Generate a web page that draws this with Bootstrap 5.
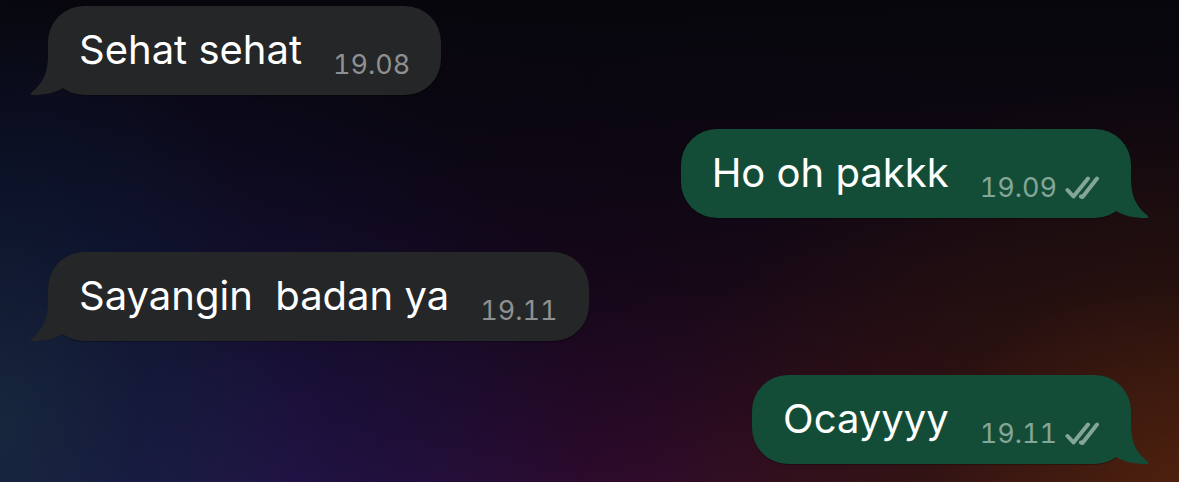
<!DOCTYPE html>
<html lang="id">
<head>
<meta charset="utf-8">
<meta name="viewport" content="width=device-width, initial-scale=1">
<title>Chat</title>
<link href="https://cdn.jsdelivr.net/npm/bootstrap@5.3.0/dist/css/bootstrap.min.css" rel="stylesheet">
<style>
  body {
    font-family: Inter, "Liberation Sans", sans-serif;
    background:
      radial-gradient(ellipse 24% 90% at 0 85%, rgba(20, 44, 62, .6), rgba(10, 28, 54, .4) 50%, transparent),
      radial-gradient(ellipse 38% 100% at 12% 100%, rgba(28, 30, 76, .5), rgba(16, 20, 60, .35) 50%, transparent),
      radial-gradient(ellipse 44% 85% at 100% 100%, rgba(80, 34, 14, .85), rgba(44, 20, 12, .5) 50%, transparent),
      linear-gradient(to bottom, #07060c, rgba(9, 6, 16, .92) 30%, rgba(10, 6, 16, .65) 60%, transparent),
      linear-gradient(to right, #24243e, #270f44 25%, #2c0a2c 50%, #38101e 75%, #3c160f);
    background-color: #07060c;
  }
  .chat { gap: 34px; padding: 6px 48px 18px; }
  .bubble {
    position: relative;
    gap: 31px;
    padding: 12px 31px 13px 31px;
    border-radius: 36px;
    color: #fff;
    font-size: 40px;
    line-height: 64px;
    white-space: pre-wrap;
    box-shadow: 0 1px 1px rgba(0, 0, 0, .3);
  }
  .bubble-in { background: #242627; --fill: #242627; --meta: #8f9091; }
  .bubble-out { background: #144d37; --fill: #144d37; --meta: #84a698; }
  .stamp { gap: 8px; color: var(--meta); font-size: 27px; font-variant-numeric: tabular-nums; line-height: 34px; padding-top: 30px; }
  .stamp time { min-width: 76px; }
  .tail { position: absolute; bottom: 0; width: 48px; height: 42px; fill: var(--fill); }
  .bubble-in .tail { left: -18px; }
  .bubble-out .tail { right: -18px; transform: scaleX(-1); }
  .ticks { width: 35px; height: 24px; fill: none; stroke: var(--meta); stroke-width: 4; stroke-linecap: round; stroke-linejoin: round; }
</style>
</head>
<body class="min-vh-100">
<svg class="d-none" aria-hidden="true">
  <symbol id="tail" viewBox="0 0 48 42"><path d="M18 0C18 20 14 29 1 40Q0 42 3 42C15 42 24 40 33 35L48 25V0Z"/></symbol>
  <symbol id="ticks" viewBox="0 0 35 24"><path d="M2.5 14L8.5 20.5L23 2.500M16 20.500L17.500 21L32 2.500"/></symbol>
</svg>
<main class="chat d-flex flex-column">
  <div class="bubble bubble-in d-flex align-self-start"><svg class="tail" aria-hidden="true"><use href="#tail"/></svg><span>Sehat sehat</span><span class="stamp d-flex align-items-center"><time>19.08</time></span></div>
  <div class="bubble bubble-out d-flex align-self-end"><svg class="tail" aria-hidden="true"><use href="#tail"/></svg><span>Ho oh pakkk</span><span class="stamp d-flex align-items-center"><time>19.09</time><svg class="ticks" role="img" aria-label="Terkirim"><use href="#ticks"/></svg></span></div>
  <div class="bubble bubble-in d-flex align-self-start"><svg class="tail" aria-hidden="true"><use href="#tail"/></svg><span>Sayangin  badan ya</span><span class="stamp d-flex align-items-center"><time>19.11</time></span></div>
  <div class="bubble bubble-out d-flex align-self-end"><svg class="tail" aria-hidden="true"><use href="#tail"/></svg><span>Ocayyyy</span><span class="stamp d-flex align-items-center"><time>19.11</time><svg class="ticks" role="img" aria-label="Terkirim"><use href="#ticks"/></svg></span></div>
</main>
<script src="https://cdn.jsdelivr.net/npm/bootstrap@5.3.0/dist/js/bootstrap.bundle.min.js"></script>
</body>
</html>
